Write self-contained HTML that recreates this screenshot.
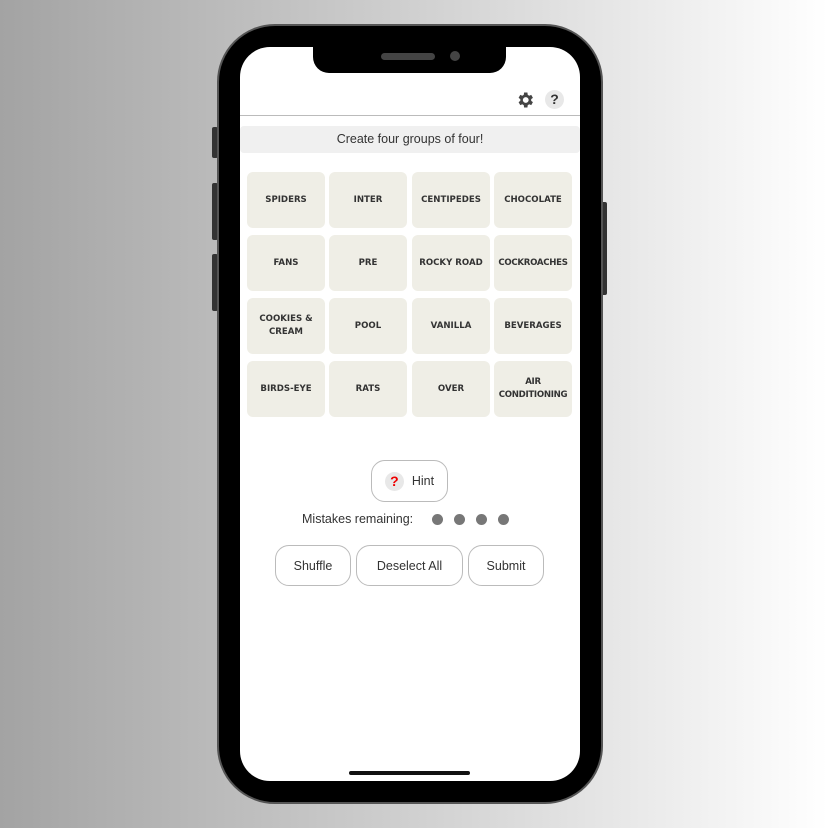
<!DOCTYPE html><html><head><style>
body{margin:0;width:828px;height:828px;overflow:hidden;background:linear-gradient(90deg,#a3a3a3 0%,#d0d0d0 50%,#fff 100%);position:relative;font-family:"Liberation Sans",sans-serif}
.a{position:absolute}
.phone{left:217px;top:24px;width:382px;height:776px;background:#000;border:2px solid #555;border-radius:58px}
.scr{left:240px;top:47px;width:340px;height:734px;background:#fff;border-radius:30px;overflow:hidden}
.btn{background:#333;border-radius:2px}
.t{position:absolute;width:78px;height:56px;background:#efeee6;border-radius:6px;display:flex;align-items:center;justify-content:center;text-align:center;font-family:"DejaVu Sans",sans-serif;font-weight:bold;font-size:8.6px;color:#333;line-height:13px}
.pill{position:absolute;border:1px solid #bbb;border-radius:14px;background:#fff;display:flex;align-items:center;justify-content:center;font-size:12.5px;color:#333;box-sizing:border-box}
.dot{position:absolute;width:11px;height:11px;border-radius:50%;background:#777;top:514px}
</style></head><body>
<div class="a btn" style="left:212px;top:127px;width:6px;height:31px"></div>
<div class="a btn" style="left:212px;top:183px;width:6px;height:57px"></div>
<div class="a btn" style="left:212px;top:254px;width:6px;height:57px"></div>
<div class="a btn" style="left:601px;top:202px;width:6px;height:93px"></div>
<div class="a phone"></div>
<div class="a scr"></div>
<div class="a" style="left:313px;top:40px;width:193px;height:33px;background:#000;border-radius:0 0 16px 16px"></div>
<div class="a" style="left:381px;top:53px;width:54px;height:7px;background:#444;border-radius:4px"></div>
<div class="a" style="left:450px;top:51px;width:10px;height:10px;background:#444;border-radius:50%"></div>
<svg class="a" style="left:515px;top:90px" width="20" height="20" viewBox="0 0 24 24"><path fill="#444" d="M19.4 13a7.5 7.5 0 000-2l2.1-1.6-2-3.5-2.5 1a7 7 0 00-1.7-1L14.9 3h-4l-.4 2.9a7 7 0 00-1.7 1l-2.5-1-2 3.5L6.4 11a7.5 7.5 0 000 2l-2.1 1.6 2 3.5 2.5-1a7 7 0 001.7 1l.4 2.9h4l.4-2.9a7 7 0 001.7-1l2.5 1 2-3.5zM12.9 15.5a3.5 3.5 0 110-7 3.5 3.5 0 010 7z"/></svg>
<div class="a" style="left:545px;top:90px;width:19px;height:19px;border-radius:50%;background:#e8e8e8;font-weight:bold;font-size:14px;color:#333;text-align:center;line-height:19px">?</div>
<div class="a" style="left:240px;top:115px;width:340px;height:1px;background:#bbb"></div>
<div class="a" style="left:240px;top:126px;width:340px;height:27px;background:#f0f0f0;border-radius:4px;text-align:center;line-height:27px;font-size:12.5px;color:#333">Create four groups of four!</div>
<div class="t" style="left:247px;top:172px">SPIDERS</div><div class="t" style="left:329px;top:172px">INTER</div><div class="t" style="left:412px;top:172px">CENTIPEDES</div><div class="t" style="left:494px;top:172px">CHOCOLATE</div>
<div class="t" style="left:247px;top:235px">FANS</div><div class="t" style="left:329px;top:235px">PRE</div><div class="t" style="left:412px;top:235px">ROCKY ROAD</div><div class="t" style="left:494px;top:235px;letter-spacing:-0.3px">COCKROACHES</div>
<div class="t" style="left:247px;top:298px">COOKIES &amp;<br>CREAM</div><div class="t" style="left:329px;top:298px">POOL</div><div class="t" style="left:412px;top:298px">VANILLA</div><div class="t" style="left:494px;top:298px">BEVERAGES</div>
<div class="t" style="left:247px;top:361px">BIRDS-EYE</div><div class="t" style="left:329px;top:361px">RATS</div><div class="t" style="left:412px;top:361px">OVER</div><div class="t" style="left:494px;top:361px;letter-spacing:-0.3px">AIR<br>CONDITIONING</div>
<div class="pill" style="left:371px;top:460px;width:77px;height:42px"><span style="display:inline-block;width:19px;height:19px;border-radius:50%;background:#e8e8e8;color:#e00;font-weight:bold;font-size:14px;text-align:center;line-height:19px;margin-right:8px">?</span>Hint</div>
<div class="a" style="left:302px;top:512px;font-size:12.5px;color:#333">Mistakes remaining:</div>
<div class="dot" style="left:432px"></div><div class="dot" style="left:454px"></div><div class="dot" style="left:476px"></div><div class="dot" style="left:498px"></div>
<div class="pill" style="left:275px;top:545px;width:76px;height:41px">Shuffle</div>
<div class="pill" style="left:356px;top:545px;width:107px;height:41px">Deselect All</div>
<div class="pill" style="left:468px;top:545px;width:76px;height:41px">Submit</div>
<div class="a" style="left:349px;top:771px;width:121px;height:4px;background:#111;border-radius:2px"></div>
</body></html>
